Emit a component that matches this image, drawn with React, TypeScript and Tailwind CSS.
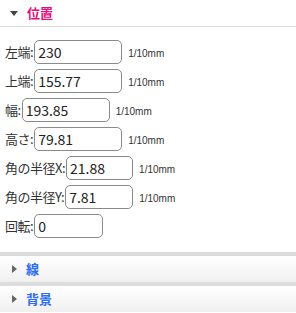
import React from 'react';

type Row = { label: string; value: string; width: string; unit?: boolean };

const rows: Row[] = [
  { label: '左端:', value: '230', width: 'w-[88px]', unit: true },
  { label: '上端:', value: '155.77', width: 'w-[88px]', unit: true },
  { label: '幅:', value: '193.85', width: 'w-[88px]', unit: true },
  { label: '高さ:', value: '79.81', width: 'w-[88px]', unit: true },
  { label: '角の半径X:', value: '21.88', width: 'w-[67px]', unit: true },
  { label: '角の半径Y:', value: '7.81', width: 'w-[68px]', unit: true },
  { label: '回転:', value: '0', width: 'w-[69px]' },
];

function Collapsed({ title }: { title: string }) {
  return (
    <div className="border-t-4 border-[#dcdcdc]">
      <div className="h-[26px] flex items-center bg-linear-to-b from-white to-[#f0f0f0] pl-[12px]">
        <span className="w-0 h-0 border-y-[4px] border-y-transparent border-l-[5px] border-l-[#666] mr-[9px]" />
        <span className="text-[13px] font-bold text-[#2a6cf2]">{title}</span>
      </div>
    </div>
  );
}

export default function App() {
  return (
    <div className="w-[296px] h-[313px] bg-white overflow-hidden font-['Noto_Sans_CJK_JP','Liberation_Sans',sans-serif]">
      <div className="h-[26px] flex items-center pl-[10px] border-b border-[#dcdcdc] box-content">
        <span className="w-0 h-0 border-x-[4px] border-x-transparent border-t-[5px] border-t-[#444] mr-[9px]" />
        <span className="text-[13px] font-bold text-[#e2107a]">位置</span>
      </div>
      <div className="pt-[13px] pb-[14px] pl-[5px] flex flex-col gap-[5px]">
        {rows.map((r) => (
          <div key={r.label} className="flex items-center h-[24px]">
            <span className="text-[13px] text-[#333] tracking-[-0.5px] mr-[1px]">{r.label}</span>
            <div
              className={`${r.width} h-[24px] border border-[#8a8a8a] rounded-[5px] flex items-center pl-[3px] text-[14px] text-[#222]`}
            >
              {r.value}
            </div>
            {r.unit && (
              <span className="ml-[6px] mt-[2px] text-[10px] text-[#333] font-['Liberation_Sans',sans-serif]">
                1/10mm
              </span>
            )}
          </div>
        ))}
      </div>
      <Collapsed title="線" />
      <Collapsed title="背景" />
    </div>
  );
}
